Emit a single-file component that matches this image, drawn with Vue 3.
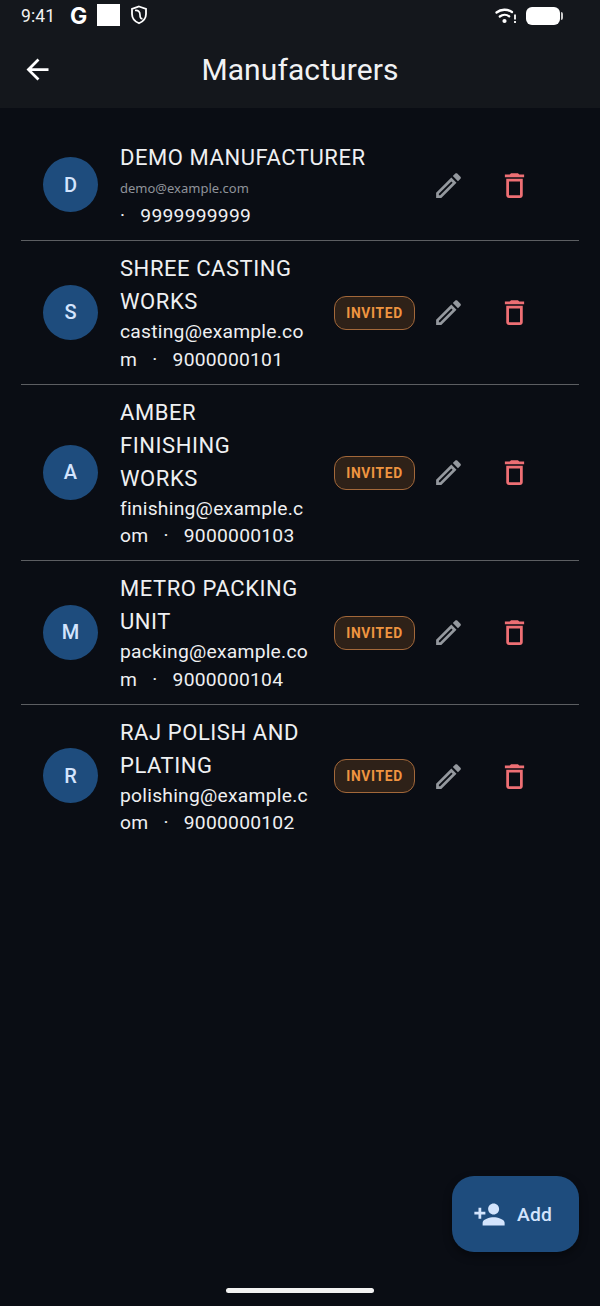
<script setup>
const rows = [
  { i: 'D', t: 'DEMO MANUFACTURER', e: 'demo@example.com', p: '9999999999', demo: true },
  { i: 'S', t: 'SHREE CASTING WORKS', e: 'casting@example.com', p: '9000000101' },
  { i: 'A', t: 'AMBER FINISHING WORKS', e: 'finishing@example.com', p: '9000000103' },
  { i: 'M', t: 'METRO PACKING UNIT', e: 'packing@example.com', p: '9000000104' },
  { i: 'R', t: 'RAJ POLISH AND PLATING', e: 'polishing@example.com', p: '9000000102' },
]
</script>

<template>
  <div class="screen">
    <header class="bar">
      <div class="status">
        <span class="time">9:41</span>
        <span class="g">G</span>
        <span class="square"></span>
        <svg class="shield" viewBox="0 0 18 20" width="18" height="20" fill="none" stroke="#fff" stroke-width="1.8">
          <path d="M9 1.500l7 2.400v5.100c0 4.300-2.900 7.500-7 9.300-4.100-1.800-7-5-7-9.300V3.900z" />
          <path d="M5 5.500c3.500-.5 5 1.500 5 4.500s1 4 2.500 3.500" stroke-width="1.700" />
        </svg>
        <span class="spacer"></span>
        <svg class="wifi" viewBox="0 0 22 18" width="22" height="18" fill="none" stroke="#fff" stroke-width="2.300" stroke-linecap="round">
          <path d="M1.500 5.500c4.500-3.600 11-3.600 15.500 -.5" />
          <path d="M4.800 9.500c2.800-2.200 6.800-2.200 9.400 -.2" />
          <circle cx="9.500" cy="14" r="2.100" fill="#fff" stroke="none" />
          <path d="M20 7.500v5" stroke-width="1.800" stroke-linecap="butt" />
          <path d="M20 14v2" stroke-width="1.800" stroke-linecap="butt" />
        </svg>
        <span class="battery"></span>
        <span class="nub"></span>
      </div>
      <div class="nav">
        <svg class="back" viewBox="0 0 24 24" width="33" height="33" fill="#fff">
          <path d="M20 11H7.830l5.590-5.590L12 4l-8 8 8 8 1.410-1.410L7.830 13H20v-2z" />
        </svg>
        <h1>Manufacturers</h1>
      </div>
    </header>

    <main class="list">
      <div v-for="r in rows" :key="r.i" class="row">
        <div class="avatar">{{ r.i }}</div>
        <div class="text">
          <div class="title">{{ r.t }}</div>
          <div class="sub">
            <template v-if="r.demo">
              <span class="demo-mail">{{ r.e }}</span>
              <span>·&nbsp;&nbsp;&nbsp;{{ r.p }}</span>
            </template>
            <template v-else>{{ r.e }}&nbsp;&nbsp;&nbsp;·&nbsp;&nbsp;&nbsp;{{ r.p }}</template>
          </div>
        </div>
        <span v-if="!r.demo" class="badge">INVITED</span>
        <button class="icon">
          <svg viewBox="0 0 24 24" width="33" height="33" fill="#94989e">
            <path d="M14.060 9.020l.92.92L5.920 19H5v-.92l9.060-9.060M17.660 3c-.25 0-.51.1-.7.29l-1.830 1.830 3.750 3.750 1.830-1.830c.39-.39.39-1.020 0-1.410l-2.340-2.340c-.2-.2-.45-.29-.71-.29zm-3.600 3.190L3 17.250V21h3.750L17.810 9.940l-3.750-3.750z" />
          </svg>
        </button>
        <button class="icon">
          <svg viewBox="0 0 24 24" width="33" height="33" fill="#ee6f74">
            <path d="M6 19c0 1.100.9 2 2 2h8c1.100 0 2-.9 2-2V7H6v12zM8 9h8v10H8V9zm7.500-5l-1-1h-5l-1 1H5v2h14V4z" />
          </svg>
        </button>
      </div>
    </main>

    <button class="fab">
      <svg viewBox="0 0 24 24" width="33" height="33" fill="#d3e4fd">
        <path d="M15 12c2.210 0 4-1.790 4-4s-1.790-4-4-4-4 1.790-4 4 1.790 4 4 4zm-9-2V7H4v3H1v2h3v3h2v-3h3v-2H6zm9 4c-2.670 0-8 1.340-8 4v2h16v-2c0-2.660-5.330-4-8-4z" />
      </svg>
      <span>Add</span>
    </button>
    <div class="home"></div>
  </div>
</template>

<style>
html, body { margin: 0; background: #0a0d14; }
</style>

<style scoped>
.screen {
  position: relative;
  width: 600px;
  height: 1306px;
  overflow: hidden;
  background: #0a0d14;
  font-family: Roboto, sans-serif;
  color: #f1f2f4;
}
.bar {
  height: 108px;
  background: #14171c;
  box-sizing: border-box;
}
.status {
  height: 31px;
  display: flex;
  align-items: center;
  padding-left: 21px;
  padding-right: 37px;
}
.time { font-size: 17.500px; color: #f2f2f2; width: 49px; letter-spacing: 0.1px; }
.g { font-family: Inter, sans-serif; font-size: 23px; font-weight: 700; color: #fff; width: 27px; line-height: 1; margin-top: 1px; }
.square { width: 23px; height: 22px; background: #fff; margin-right: 10px; margin-top: -1px; }
.shield { margin-top: -1px; }
.spacer { flex: 1; }
.wifi { margin-right: 9px; margin-left: -1px; }
.battery { width: 34px; height: 18px; border-radius: 6px; background: #fff; }
.nub { width: 2px; height: 8px; background: #ccc; margin-left: 1px; border-radius: 0 2px 2px 0; }
.nav {
  position: relative;
  height: 77px;
  display: flex;
  align-items: center;
  justify-content: center;
}
.back { position: absolute; left: 21px; top: 22px; }
h1 {
  margin: 0;
  font-size: 30px;
  font-weight: 400;
  letter-spacing: 0.1px;
  color: #f1f2f4;
  line-height: 75px;
}
.list { padding: 23px 21px 0; }
.row {
  display: flex;
  align-items: center;
  padding: 10.700px 32px 10.800px 22px;
  border-bottom: 1px solid #5c5e62;
}
.row:first-child { padding-top: 9.700px; }
.row:last-child { border-bottom: 0; }
.avatar {
  width: 55px;
  height: 55px;
  flex: none;
  border-radius: 50%;
  background: #1e4c7d;
  color: #d3e4fd;
  font-size: 20px;
  font-weight: 500;
  display: flex;
  align-items: center;
  justify-content: center;
  margin-right: 22px;
  margin-top: -1px;
}
.text { flex: 1; min-width: 0; }
.title {
  font-size: 22px;
  line-height: 33px;
  letter-spacing: 0.56px;
  color: #eff0f2;
}
.sub {
  font-size: 19.250px;
  line-height: 27.500px;
  letter-spacing: 0.25px;
  color: #eff0f2;
  overflow-wrap: anywhere;
}
.sub span { display: block; }
.sub .demo-mail {
  font-family: "Noto Sans", sans-serif;
  font-size: 13px;
  line-height: 28.500px;
  letter-spacing: 0;
  color: #8f939a;
}
.row .badge {
  flex: none;
  margin-left: 22px;
  width: 81px;
  height: 34px;
  box-sizing: border-box;
  border: 1.600px solid #a3683a;
  border-radius: 12px;
  background: #2e2118;
  color: #ef9440;
  font-size: 13.750px;
  font-weight: 700;
  letter-spacing: 0.7px;
  display: flex;
  align-items: center;
  justify-content: center;
}
.icon {
  flex: none;
  width: 66px;
  height: 66px;
  padding: 0;
  border: 0;
  background: none;
  display: flex;
  align-items: center;
  justify-content: center;
}
.fab {
  position: absolute;
  left: 452px;
  top: 1176px;
  width: 127px;
  height: 76px;
  border: 0;
  border-radius: 22px;
  background: #1e4c7d;
  color: #d3e4fd;
  font-family: Roboto, sans-serif;
  font-size: 19.250px;
  font-weight: 500;
  letter-spacing: 0.14px;
  display: flex;
  align-items: center;
  justify-content: center;
  gap: 11px;
  padding: 0 6px 0 0;
  box-shadow: 0 4px 8px rgba(0, 0, 0, 0.4);
}
.home {
  position: absolute;
  left: 226px;
  top: 1288px;
  width: 148px;
  height: 5px;
  border-radius: 3px;
  background: #f2f2f2;
}
</style>
